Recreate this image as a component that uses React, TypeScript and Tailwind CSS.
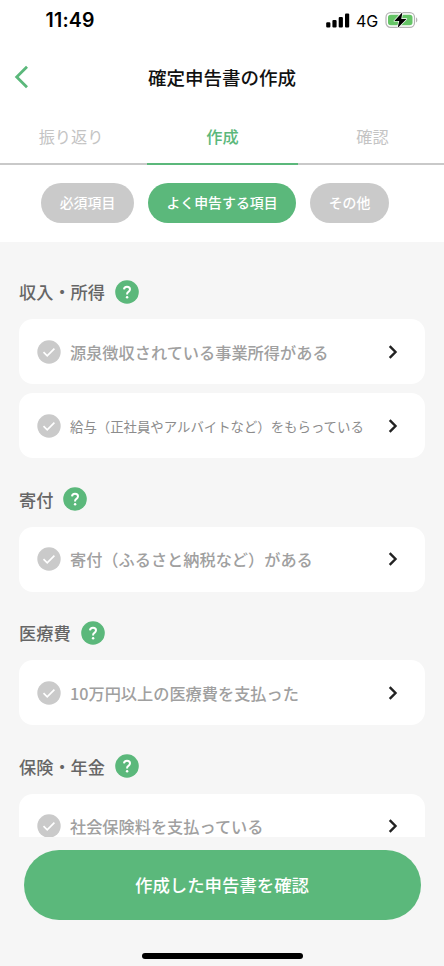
const groups = [
  {
    title: "収入・所得",
    items: [
      { label: "源泉徴収されている事業所得がある" },
      { label: "給与（正社員やアルバイトなど）をもらっている", small: true },
    ],
  },
  { title: "寄付", items: [{ label: "寄付（ふるさと納税など）がある" }] },
  { title: "医療費", items: [{ label: "10万円以上の医療費を支払った" }] },
  { title: "保険・年金", items: [{ label: "社会保険料を支払っている" }] },
];

function StatusBar() {
  return (
    <div className="flex h-10 shrink-0 items-center justify-between pr-[25px] pl-[45.5px] font-['Inter',sans-serif] text-black">
      <span className="pt-px text-[19.5px] font-semibold leading-none tracking-[0.2px]">11:49</span>
      <div className="flex items-center">
        <svg width="24" height="15" viewBox="0 0 24 15" fill="currentColor">
          <rect x="0.2" y="9.3" width="4.2" height="5.2" rx="1.1" />
          <rect x="6.4" y="7" width="4.2" height="7.5" rx="1.1" />
          <rect x="12.7" y="4" width="4.2" height="10.5" rx="1.1" />
          <rect x="19" y="0.5" width="4.2" height="14" rx="1.1" />
        </svg>
        <span className="ml-[6px] w-[23px] pt-px text-[16px] leading-none">4G</span>
        <svg className="ml-[6px]" width="34" height="18" viewBox="0 0 34 18" fill="none">
          <rect x="1" y="1.7" width="28.5" height="14.6" rx="4.6" stroke="#b4b4b4" strokeWidth="1.2" />
          <rect x="3" y="3.7" width="24.5" height="10.6" rx="2.8" fill="#65c466" />
          <path d="M31 6.6c1.8.5 1.8 4.3 0 4.8z" fill="#b4b4b4" />
          <path
            d="M17.4 1.2 9.3 9.9h4.9l-1.6 7 8.9-8.9h-5.2z"
            fill="#000"
            stroke="#fff"
            strokeWidth="1.4"
            strokeLinejoin="round"
            paintOrder="stroke"
          />
        </svg>
      </div>
    </div>
  );
}

function Header() {
  return (
    <header className="grid h-[74px] shrink-0 grid-cols-[60px_1fr_60px] items-center">
      <button className="pl-[14px]" aria-label="戻る">
        <svg width="15" height="24" viewBox="0 0 15 24" fill="none">
          <path d="M13 1.7 2.7 12 13 22.3" stroke="#5bb87b" strokeWidth="2.8" />
        </svg>
      </button>
      <h1 className="pt-px text-center text-[18.5px] font-medium text-[#111]">確定申告書の作成</h1>
    </header>
  );
}

function Tabs() {
  return (
    <nav className="grid h-[50.5px] shrink-0 grid-cols-[147px_151px_146px] text-center text-[16.2px] leading-[45px] text-[#c4c4c4]">
      <span className="border-b-2 border-[#c9c9c9] pr-[5px]">振り返り</span>
      <span className="border-b-2 border-[#5bb87b] font-medium text-[#5bb87b]">作成</span>
      <span className="border-b-2 border-[#c9c9c9] pl-[3px]">確認</span>
    </nav>
  );
}

function Chips() {
  return (
    <div className="flex h-[77px] shrink-0 items-center gap-[14px] pl-[41px] text-[13.9px] font-medium leading-none text-white">
      <button className="h-[40px] w-[93px] rounded-full bg-[#cacaca]">必須項目</button>
      <button className="h-[40px] w-[148px] rounded-full bg-[#5bb87b]">よく申告する項目</button>
      <button className="h-[40px] w-[79px] rounded-full bg-[#cacaca]">その他</button>
    </div>
  );
}

function HelpIcon() {
  return (
    <svg width="24" height="24" viewBox="0 0 24 24" fill="none">
      <circle cx="12" cy="12" r="11.8" fill="#5bb87b" />
      <path
        d="M9 9.4c.1-1.7 1.3-2.7 3-2.7s3 1 3 2.6c0 1.2-.7 1.9-1.6 2.6-.9.6-1.3 1.1-1.3 2.1v.5"
        stroke="#fff"
        strokeWidth="2"
      />
      <circle cx="12.1" cy="17.3" r="1.25" fill="#fff" />
    </svg>
  );
}

function Item({ label, small }: { label: string; small?: boolean }) {
  return (
    <li className="flex h-[65px] items-center rounded-[14px] bg-white pr-[27px] pl-[18px]">
      <svg className="shrink-0" width="24" height="24" viewBox="0 0 24 24" fill="none">
        <circle cx="12" cy="12" r="11.7" fill="#cacaca" />
        <path d="m6.5 12.2 3.7 3.6 7.2-7.2" stroke="#fff" strokeWidth="1.7" />
      </svg>
      <span
        className={
          small
            ? "ml-[9px] flex-1 whitespace-nowrap text-[13.4px] text-[#8c8c8c]"
            : "ml-[9px] flex-1 whitespace-nowrap text-[16.22px] font-medium text-[#a0a0a0]"
        }
      >
        {label}
      </span>
      <svg className="shrink-0" width="10" height="14" viewBox="0 0 10 14" fill="none">
        <path d="m1.7 1.2 5.8 5.8-5.8 5.8" stroke="#222" strokeWidth="2.4" />
      </svg>
    </li>
  );
}

export default function App() {
  return (
    <div className="flex h-[966px] w-[444px] flex-col overflow-hidden bg-white font-['Noto_Sans_CJK_JP',sans-serif]">
      <StatusBar />
      <Header />
      <Tabs />
      <Chips />
      <main className="h-[595px] shrink-0 overflow-hidden bg-[#f6f6f6] px-[19px] pt-[38.3px]">
        {groups.map((group) => (
          <section key={group.title} className="mb-[29px]">
            <div className="flex h-[24px] items-center gap-[10px]">
              <h2 className="text-[17.2px] font-medium leading-none text-[#666]">{group.title}</h2>
              <HelpIcon />
            </div>
            <ul className="mt-[15.5px] flex flex-col gap-[9px]">
              {group.items.map((item) => (
                <Item key={item.label} {...item} />
              ))}
            </ul>
          </section>
        ))}
      </main>
      <footer className="flex flex-1 flex-col items-center bg-[#f6f6f6] pt-[13.5px]">
        <button className="h-[70px] w-[397px] rounded-full bg-[#5bb87b] text-[17.4px] font-medium text-white">
          作成した申告書を確認
        </button>
        <div className="mt-[33px] h-[6px] w-[161px] rounded-full bg-black" />
      </footer>
    </div>
  );
}
